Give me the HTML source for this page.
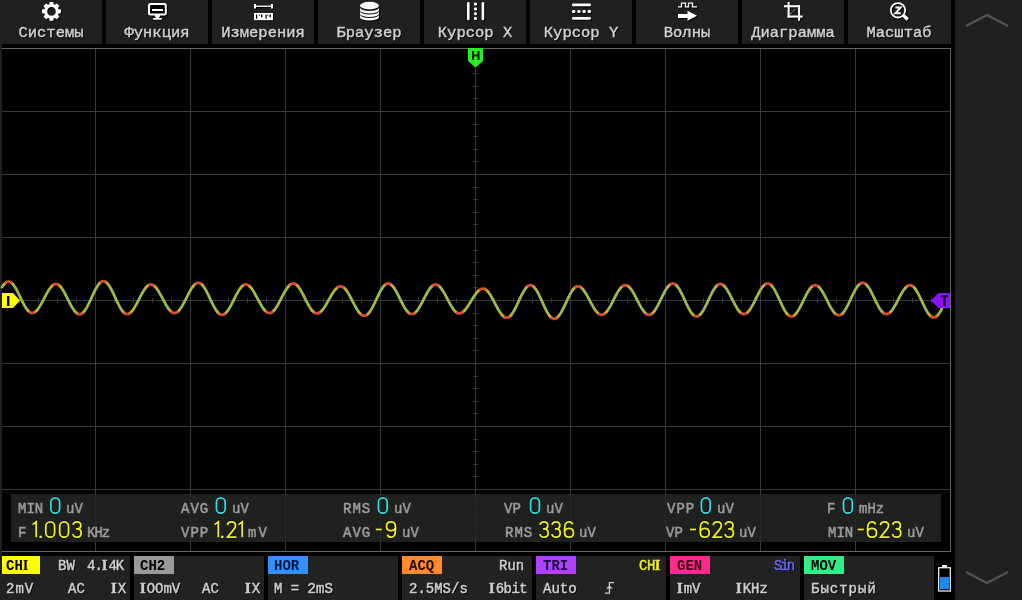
<!DOCTYPE html>
<html><head><meta charset="utf-8">
<style>
*{margin:0;padding:0;box-sizing:border-box}
html,body{width:1022px;height:600px;overflow:hidden;background:#000}
body{position:relative;font-family:"Liberation Mono",monospace;}
.btn,.pn,.pt,.ml,.lbt{will-change:transform}
.a{position:absolute}
.btn{position:absolute;top:0;width:102px;height:44px;background:#202020}
.btn .t{position:absolute;left:0;width:102px;top:25px;text-align:center;font-size:15.5px;line-height:16px;-webkit-text-stroke-width:0.4px;color:#d2d2d2;text-shadow:1px 1px 0 #000;white-space:nowrap}
.btn svg{position:absolute;left:41px;top:1px}
.pn{position:absolute;top:556px;height:44px;width:130px;background:#222}
.lb{position:absolute;left:0;top:0;width:40px;height:18px}
.pt{position:absolute;font-size:14px;line-height:14px;color:#cfcfcf;-webkit-text-stroke-width:0.45px;text-shadow:1px 1px 0 #000;white-space:nowrap}
.lbt{position:absolute;left:6px;top:2px;font-size:14px;line-height:14px;font-weight:bold;white-space:nowrap}
.ml{position:absolute;font-size:14px;line-height:14px;color:#9c9c9c;-webkit-text-stroke-width:0.5px;white-space:nowrap}
.mv{position:absolute;font-family:"Liberation Sans",sans-serif;font-size:24px;line-height:24px;white-space:nowrap;letter-spacing:1px;transform:scaleX(0.86);transform-origin:0 0}
.i{font-family:"Liberation Serif",serif;font-weight:bold;font-size:14.5px;letter-spacing:1px;line-height:0}
.cy{color:#22d2e6}.yl{color:#eeee22}
</style></head><body>
<!-- left strip -->
<div class="a" style="left:0;top:44px;width:2px;height:530px;background:#202020"></div>
<!-- right panel -->
<div class="a" style="left:955px;top:0;width:67px;height:600px;background:#202020"></div>
<svg class="a" style="left:955px;top:0" width="67" height="600">
<polyline points="11,26 32,15 53,26" fill="none" stroke="#555" stroke-width="2"/>
<polyline points="11,572 32,583 53,572" fill="none" stroke="#555" stroke-width="2"/>
</svg>

<!-- top buttons -->
<div class="btn" style="left:0"><div class="t">Системы</div></div>
<div class="btn" style="left:106px"><div class="t">Функция</div></div>
<div class="btn" style="left:212px"><div class="t">Измерения</div></div>
<div class="btn" style="left:318px"><div class="t">Браузер</div></div>
<div class="btn" style="left:424px"><div class="t">Курсор X</div></div>
<div class="btn" style="left:530px"><div class="t">Курсор Y</div></div>
<div class="btn" style="left:636px"><div class="t">Волны</div></div>
<div class="btn" style="left:742px"><div class="t">Диаграмма</div></div>
<div class="btn" style="left:848px;width:103px"><div class="t">Масштаб</div></div>


<!-- top icons -->
<svg class="a" style="left:0;top:0" width="955" height="44">
<g fill="#fff" stroke="#fff" style="filter:drop-shadow(1px 1px 0 #000)">
<path d="M49.31 4.33 L49.69 1.97 L53.31 1.97 L53.69 4.33 L54.95 4.85 L56.88 3.45 L59.45 6.02 L58.05 7.95 L58.57 9.21 L60.93 9.59 L60.93 13.21 L58.57 13.59 L58.05 14.85 L59.45 16.78 L56.88 19.35 L54.95 17.95 L53.69 18.47 L53.31 20.83 L49.69 20.83 L49.31 18.47 L48.05 17.95 L46.12 19.35 L43.55 16.78 L44.95 14.85 L44.43 13.59 L42.07 13.21 L42.07 9.59 L44.43 9.21 L44.95 7.95 L43.55 6.02 L46.12 3.45 L48.05 4.85Z M47.20 11.40 a4.3 4.3 0 1 0 8.6 0 a4.3 4.3 0 1 0 -8.6 0Z" fill-rule="evenodd" stroke="none"/>
<!-- monitor -->
<rect x="149" y="4" width="16.8" height="10.6" rx="1.5" fill="#000" stroke-width="2"/>
<rect x="152" y="9" width="11" height="2" stroke="none"/>
<path d="M155 15V16.5L156.3 18H153.2V19.8H161.8V18H158.7L160 16.5V15Z" stroke="none"/>
<!-- ruler -->
<rect x="254" y="4" width="2" height="4.5" stroke="none"/><rect x="271" y="4" width="2" height="4.5" stroke="none"/>
<rect x="256" y="5.6" width="15" height="1.3" stroke="none"/>
<rect x="254" y="13" width="19" height="7.2" stroke="none"/>
<!-- database -->
<ellipse cx="369.5" cy="5.6" rx="9.5" ry="3.8" stroke="none"/>
<path d="M360 7.5 v2.5 a9.5 3.6 0 0 0 19 0 v-2.5 a9.5 3.6 0 0 1 -19 0Z" stroke="none"/>
<path d="M360 11 v2.5 a9.5 3.6 0 0 0 19 0 v-2.5 a9.5 3.6 0 0 1 -19 0Z" stroke="none"/>
<path d="M360 14.5 v2.5 a9.5 3.6 0 0 0 19 0 v-2.5 a9.5 3.6 0 0 1 -19 0Z" stroke="none"/>
<!-- cursor x -->
<rect x="467" y="2" width="2.6" height="18.3" rx="1.2" stroke="none"/><rect x="481.6" y="2" width="2.6" height="18.3" rx="1.2" stroke="none"/>
<rect x="474" y="2.6" width="3" height="3" rx="1.2" stroke="none"/><rect x="474" y="7.4" width="3" height="3" rx="1.2" stroke="none"/><rect x="474" y="12.2" width="3" height="3" rx="1.2" stroke="none"/><rect x="474" y="17" width="3" height="3" rx="1.2" stroke="none"/>
<!-- cursor y -->
<rect x="572" y="3.6" width="19" height="2.6" rx="1.2" stroke="none"/><rect x="572" y="17.1" width="19" height="2.6" rx="1.2" stroke="none"/>
<rect x="572" y="10" width="3.4" height="3" rx="1.2" stroke="none"/><rect x="577.2" y="10" width="3.4" height="3" rx="1.2" stroke="none"/><rect x="582.4" y="10" width="3.4" height="3" rx="1.2" stroke="none"/><rect x="587.6" y="10" width="3.4" height="3" rx="1.2" stroke="none"/>
<!-- waves -->
<path d="M678 6.8 H681.5 V3.2 H685.5 V6.8 H688.5 V3.2 H692.5 V6.8 H697" fill="none" stroke-width="1.3"/>
<rect x="678" y="14" width="10" height="4" stroke="none"/>
<path d="M687.5 10.8 L697 15.8 L687.5 20.7Z" stroke="none"/>
<!-- crop -->
<rect x="787.6" y="2" width="2.1" height="15.6" stroke="none"/>
<rect x="784" y="5.2" width="16" height="2.1" stroke="none"/>
<rect x="798" y="5.2" width="2.1" height="15.5" stroke="none"/>
<rect x="787.6" y="15.5" width="15.1" height="2.1" stroke="none"/>
<path d="M790 14.2 L796 8.6" stroke-width="0.9" stroke-dasharray="1 1"/>
<!-- zoom -->
<circle cx="898" cy="10.3" r="7.2" fill="none" stroke-width="1.8"/>
<path d="M895.5 7.6 H900.6 L895.5 13.2 H900.8" fill="none" stroke-width="2"/>
<path d="M903.5 15.5 L907.8 19.5" stroke-width="3.2"/>
</g>
<g fill="#000">
<rect x="256" y="14.5" width="1.2" height="4.2"/><rect x="261" y="14.5" width="1.4" height="2.8"/><rect x="265.5" y="14.5" width="1.2" height="4.2"/><rect x="269.5" y="14.5" width="1.4" height="2.8"/>
<rect x="259" y="14.5" width="0.8" height="1.4"/><rect x="267.5" y="14.5" width="0.8" height="1.4"/>
</g>
</svg>

<!-- grid -->
<svg class="a" style="left:0;top:0" width="955" height="556">
<g stroke="#3a3a3a" stroke-width="1" shape-rendering="crispEdges">
<path d="M95.5 48V552M190.5 48V552M285.5 48V552M380.5 48V552M475.5 48V552M570.5 48V552M665.5 48V552M760.5 48V552M855.5 48V552"/>
<path d="M2 111.5H950M2 174.5H950M2 237.5H950M2 300.5H950M2 363.5H950M2 426.5H950M2 489.5H950"/>
</g>
<g stroke="#3a3a3a" stroke-width="1" shape-rendering="crispEdges"><path d="M19.5 298V303 M38.5 298V303 M57.5 298V303 M76.5 298V303 M114.5 298V303 M133.5 298V303 M152.5 298V303 M171.5 298V303 M209.5 298V303 M228.5 298V303 M247.5 298V303 M266.5 298V303 M304.5 298V303 M323.5 298V303 M342.5 298V303 M361.5 298V303 M399.5 298V303 M418.5 298V303 M437.5 298V303 M456.5 298V303 M494.5 298V303 M513.5 298V303 M532.5 298V303 M551.5 298V303 M589.5 298V303 M608.5 298V303 M627.5 298V303 M646.5 298V303 M684.5 298V303 M703.5 298V303 M722.5 298V303 M741.5 298V303 M779.5 298V303 M798.5 298V303 M817.5 298V303 M836.5 298V303 M874.5 298V303 M893.5 298V303 M912.5 298V303 M931.5 298V303 M473 61.1H478 M473 73.7H478 M473 86.3H478 M473 98.9H478 M473 124.1H478 M473 136.7H478 M473 149.3H478 M473 161.9H478 M473 187.1H478 M473 199.7H478 M473 212.3H478 M473 224.9H478 M473 250.1H478 M473 262.7H478 M473 275.3H478 M473 287.9H478 M473 313.1H478 M473 325.7H478 M473 338.3H478 M473 350.9H478 M473 376.1H478 M473 388.7H478 M473 401.3H478 M473 413.9H478 M473 439.1H478 M473 451.7H478 M473 464.3H478 M473 476.9H478 M473 502.1H478 M473 514.7H478 M473 527.3H478 M473 539.9H478" stroke="#3a3a3a"/></g>
<g stroke="#666" stroke-width="1" shape-rendering="crispEdges">
<path d="M2 48.5H951M2 551.5H951M950.5 48V552"/>
</g>
</svg>


<!-- waveform -->
<svg class="a" style="left:0;top:0" width="955" height="556">
<g fill="none" stroke-linejoin="round" stroke-linecap="round">
<path d="M2.0 287.1 L3.0 285.6 L4.0 284.3 L5.0 283.3 L6.0 282.5 L7.0 281.9 L8.0 281.6 L9.0 281.6 L10.0 281.9 L11.0 282.5 L12.0 283.3 L13.0 284.3 L14.0 285.6 L15.0 287.1 L16.0 288.7 L17.0 290.6 L18.0 292.5 L19.0 294.5 L20.0 296.6 L21.0 298.7 L22.0 300.7 L23.0 302.7 L24.0 304.6 L25.0 306.4 L26.0 308.0 L27.0 309.4 L28.0 310.6 L29.0 311.6 L30.0 312.3 L31.0 312.8 L32.0 313.0 L33.0 312.9 L34.0 312.6 L35.0 312.0 L36.0 311.2 L37.0 310.2 L38.0 308.9 L39.0 307.5 L40.0 305.9 L41.0 304.2 L42.0 302.4 L43.0 300.6 L44.0 298.6 L45.0 296.7 L46.0 294.8 L47.0 293.0 L48.0 291.3 L49.0 289.7 L50.0 288.3 L51.0 287.0 L52.0 285.9 L53.0 285.1 L54.0 284.5 L55.0 284.1 L56.0 284.0 L57.0 284.1 L58.0 284.6 L59.0 285.2 L60.0 286.1 L61.0 287.3 L62.0 288.6 L63.0 290.1 L64.0 291.8 L65.0 293.7 L66.0 295.6 L67.0 297.5 L68.0 299.6 L69.0 301.5 L70.0 303.5 L71.0 305.4 L72.0 307.2 L73.0 308.8 L74.0 310.2 L75.0 311.5 L76.0 312.6 L77.0 313.4 L78.0 313.9 L79.0 314.2 L80.0 314.3 L81.0 314.0 L82.0 313.5 L83.0 312.7 L84.0 311.6 L85.0 310.3 L86.0 308.8 L87.0 307.1 L88.0 305.2 L89.0 303.2 L90.0 301.1 L91.0 298.9 L92.0 296.7 L93.0 294.5 L94.0 292.4 L95.0 290.4 L96.0 288.5 L97.0 286.8 L98.0 285.2 L99.0 283.9 L100.0 282.8 L101.0 282.0 L102.0 281.5 L103.0 281.2 L104.0 281.3 L105.0 281.6 L106.0 282.2 L107.0 283.0 L108.0 284.2 L109.0 285.5 L110.0 287.1 L111.0 288.9 L112.0 290.8 L113.0 292.8 L114.0 294.9 L115.0 297.1 L116.0 299.3 L117.0 301.4 L118.0 303.5 L119.0 305.5 L120.0 307.3 L121.0 309.0 L122.0 310.5 L123.0 311.7 L124.0 312.7 L125.0 313.5 L126.0 313.9 L127.0 314.1 L128.0 314.0 L129.0 313.6 L130.0 313.0 L131.0 312.2 L132.0 311.1 L133.0 309.8 L134.0 308.4 L135.0 306.7 L136.0 305.0 L137.0 303.1 L138.0 301.2 L139.0 299.3 L140.0 297.3 L141.0 295.4 L142.0 293.5 L143.0 291.8 L144.0 290.2 L145.0 288.7 L146.0 287.4 L147.0 286.4 L148.0 285.5 L149.0 284.9 L150.0 284.6 L151.0 284.5 L152.0 284.7 L153.0 285.1 L154.0 285.7 L155.0 286.6 L156.0 287.7 L157.0 289.0 L158.0 290.4 L159.0 292.0 L160.0 293.8 L161.0 295.6 L162.0 297.4 L163.0 299.3 L164.0 301.2 L165.0 303.0 L166.0 304.8 L167.0 306.4 L168.0 308.0 L169.0 309.3 L170.0 310.5 L171.0 311.5 L172.0 312.2 L173.0 312.7 L174.0 313.0 L175.0 313.0 L176.0 312.7 L177.0 312.2 L178.0 311.5 L179.0 310.5 L180.0 309.2 L181.0 307.8 L182.0 306.2 L183.0 304.5 L184.0 302.7 L185.0 300.7 L186.0 298.7 L187.0 296.8 L188.0 294.8 L189.0 292.9 L190.0 291.0 L191.0 289.3 L192.0 287.7 L193.0 286.4 L194.0 285.2 L195.0 284.2 L196.0 283.5 L197.0 283.0 L198.0 282.8 L199.0 282.9 L200.0 283.2 L201.0 283.8 L202.0 284.7 L203.0 285.8 L204.0 287.2 L205.0 288.7 L206.0 290.4 L207.0 292.3 L208.0 294.3 L209.0 296.4 L210.0 298.5 L211.0 300.6 L212.0 302.7 L213.0 304.7 L214.0 306.6 L215.0 308.4 L216.0 310.0 L217.0 311.4 L218.0 312.6 L219.0 313.6 L220.0 314.2 L221.0 314.7 L222.0 314.8 L223.0 314.7 L224.0 314.3 L225.0 313.6 L226.0 312.7 L227.0 311.6 L228.0 310.3 L229.0 308.8 L230.0 307.1 L231.0 305.3 L232.0 303.4 L233.0 301.4 L234.0 299.4 L235.0 297.4 L236.0 295.4 L237.0 293.6 L238.0 291.8 L239.0 290.1 L240.0 288.7 L241.0 287.4 L242.0 286.3 L243.0 285.5 L244.0 284.9 L245.0 284.6 L246.0 284.5 L247.0 284.7 L248.0 285.1 L249.0 285.8 L250.0 286.7 L251.0 287.8 L252.0 289.1 L253.0 290.6 L254.0 292.2 L255.0 293.9 L256.0 295.8 L257.0 297.6 L258.0 299.5 L259.0 301.4 L260.0 303.2 L261.0 305.0 L262.0 306.6 L263.0 308.1 L264.0 309.4 L265.0 310.6 L266.0 311.5 L267.0 312.3 L268.0 312.7 L269.0 313.0 L270.0 313.0 L271.0 312.7 L272.0 312.2 L273.0 311.4 L274.0 310.4 L275.0 309.2 L276.0 307.8 L277.0 306.2 L278.0 304.5 L279.0 302.7 L280.0 300.8 L281.0 298.9 L282.0 296.9 L283.0 295.0 L284.0 293.1 L285.0 291.4 L286.0 289.7 L287.0 288.2 L288.0 286.9 L289.0 285.7 L290.0 284.8 L291.0 284.1 L292.0 283.7 L293.0 283.5 L294.0 283.6 L295.0 283.9 L296.0 284.5 L297.0 285.4 L298.0 286.4 L299.0 287.7 L300.0 289.2 L301.0 290.8 L302.0 292.6 L303.0 294.4 L304.0 296.4 L305.0 298.4 L306.0 300.3 L307.0 302.3 L308.0 304.1 L309.0 305.9 L310.0 307.6 L311.0 309.1 L312.0 310.4 L313.0 311.4 L314.0 312.3 L315.0 312.9 L316.0 313.3 L317.0 313.4 L318.0 313.3 L319.0 312.9 L320.0 312.3 L321.0 311.5 L322.0 310.4 L323.0 309.2 L324.0 307.9 L325.0 306.3 L326.0 304.7 L327.0 303.0 L328.0 301.2 L329.0 299.4 L330.0 297.7 L331.0 295.9 L332.0 294.2 L333.0 292.7 L334.0 291.2 L335.0 289.9 L336.0 288.8 L337.0 287.8 L338.0 287.1 L339.0 286.6 L340.0 286.4 L341.0 286.3 L342.0 286.5 L343.0 287.0 L344.0 287.7 L345.0 288.7 L346.0 289.9 L347.0 291.2 L348.0 292.8 L349.0 294.4 L350.0 296.3 L351.0 298.1 L352.0 300.1 L353.0 302.0 L354.0 304.0 L355.0 305.8 L356.0 307.7 L357.0 309.3 L358.0 310.9 L359.0 312.2 L360.0 313.4 L361.0 314.4 L362.0 315.1 L363.0 315.6 L364.0 315.8 L365.0 315.7 L366.0 315.4 L367.0 314.8 L368.0 314.0 L369.0 312.8 L370.0 311.5 L371.0 309.9 L372.0 308.2 L373.0 306.3 L374.0 304.3 L375.0 302.3 L376.0 300.1 L377.0 298.0 L378.0 295.9 L379.0 293.9 L380.0 291.9 L381.0 290.1 L382.0 288.5 L383.0 287.0 L384.0 285.8 L385.0 284.8 L386.0 284.1 L387.0 283.7 L388.0 283.5 L389.0 283.6 L390.0 284.0 L391.0 284.6 L392.0 285.5 L393.0 286.6 L394.0 287.9 L395.0 289.5 L396.0 291.1 L397.0 293.0 L398.0 294.9 L399.0 296.9 L400.0 298.9 L401.0 300.9 L402.0 302.9 L403.0 304.8 L404.0 306.6 L405.0 308.3 L406.0 309.8 L407.0 311.1 L408.0 312.2 L409.0 313.1 L410.0 313.7 L411.0 314.0 L412.0 314.1 L413.0 313.9 L414.0 313.5 L415.0 312.8 L416.0 311.9 L417.0 310.7 L418.0 309.4 L419.0 307.9 L420.0 306.2 L421.0 304.4 L422.0 302.6 L423.0 300.6 L424.0 298.7 L425.0 296.7 L426.0 294.8 L427.0 293.0 L428.0 291.3 L429.0 289.7 L430.0 288.3 L431.0 287.1 L432.0 286.1 L433.0 285.3 L434.0 284.8 L435.0 284.5 L436.0 284.5 L437.0 284.8 L438.0 285.3 L439.0 286.0 L440.0 286.9 L441.0 288.1 L442.0 289.5 L443.0 291.0 L444.0 292.7 L445.0 294.4 L446.0 296.3 L447.0 298.2 L448.0 300.1 L449.0 302.0 L450.0 303.8 L451.0 305.6 L452.0 307.2 L453.0 308.7 L454.0 310.0 L455.0 311.2 L456.0 312.1 L457.0 312.8 L458.0 313.2 L459.0 313.4 L460.0 313.3 L461.0 313.1 L462.0 312.6 L463.0 311.9 L464.0 311.0 L465.0 310.0 L466.0 308.8 L467.0 307.4 L468.0 306.0 L469.0 304.4 L470.0 302.8 L471.0 301.2 L472.0 299.6 L473.0 298.0 L474.0 296.4 L475.0 294.9 L476.0 293.5 L477.0 292.3 L478.0 291.2 L479.0 290.3 L480.0 289.6 L481.0 289.0 L482.0 288.7 L483.0 288.6 L484.0 288.7 L485.0 289.1 L486.0 289.7 L487.0 290.6 L488.0 291.7 L489.0 293.0 L490.0 294.4 L491.0 296.0 L492.0 297.8 L493.0 299.6 L494.0 301.5 L495.0 303.4 L496.0 305.4 L497.0 307.2 L498.0 309.1 L499.0 310.8 L500.0 312.3 L501.0 313.7 L502.0 315.0 L503.0 316.0 L504.0 316.8 L505.0 317.3 L506.0 317.6 L507.0 317.7 L508.0 317.5 L509.0 317.0 L510.0 316.2 L511.0 315.1 L512.0 313.9 L513.0 312.4 L514.0 310.7 L515.0 308.9 L516.0 306.9 L517.0 304.8 L518.0 302.7 L519.0 300.5 L520.0 298.4 L521.0 296.3 L522.0 294.3 L523.0 292.5 L524.0 290.8 L525.0 289.2 L526.0 287.9 L527.0 286.9 L528.0 286.0 L529.0 285.5 L530.0 285.2 L531.0 285.2 L532.0 285.6 L533.0 286.2 L534.0 287.0 L535.0 288.2 L536.0 289.5 L537.0 291.1 L538.0 292.9 L539.0 294.9 L540.0 297.0 L541.0 299.1 L542.0 301.3 L543.0 303.6 L544.0 305.8 L545.0 307.9 L546.0 309.9 L547.0 311.8 L548.0 313.5 L549.0 315.0 L550.0 316.3 L551.0 317.4 L552.0 318.1 L553.0 318.6 L554.0 318.8 L555.0 318.7 L556.0 318.3 L557.0 317.7 L558.0 316.7 L559.0 315.6 L560.0 314.2 L561.0 312.6 L562.0 310.8 L563.0 308.9 L564.0 306.9 L565.0 304.7 L566.0 302.6 L567.0 300.5 L568.0 298.4 L569.0 296.3 L570.0 294.4 L571.0 292.6 L572.0 291.0 L573.0 289.6 L574.0 288.4 L575.0 287.5 L576.0 286.8 L577.0 286.4 L578.0 286.3 L579.0 286.5 L580.0 286.8 L581.0 287.5 L582.0 288.4 L583.0 289.4 L584.0 290.7 L585.0 292.2 L586.0 293.8 L587.0 295.5 L588.0 297.3 L589.0 299.1 L590.0 301.0 L591.0 302.9 L592.0 304.7 L593.0 306.5 L594.0 308.2 L595.0 309.7 L596.0 311.1 L597.0 312.2 L598.0 313.2 L599.0 314.0 L600.0 314.5 L601.0 314.8 L602.0 314.8 L603.0 314.5 L604.0 314.1 L605.0 313.3 L606.0 312.4 L607.0 311.2 L608.0 309.8 L609.0 308.3 L610.0 306.6 L611.0 304.8 L612.0 302.9 L613.0 300.9 L614.0 299.0 L615.0 297.0 L616.0 295.1 L617.0 293.3 L618.0 291.7 L619.0 290.1 L620.0 288.8 L621.0 287.6 L622.0 286.6 L623.0 285.9 L624.0 285.4 L625.0 285.2 L626.0 285.3 L627.0 285.6 L628.0 286.1 L629.0 286.9 L630.0 287.9 L631.0 289.2 L632.0 290.6 L633.0 292.2 L634.0 293.9 L635.0 295.7 L636.0 297.7 L637.0 299.6 L638.0 301.6 L639.0 303.5 L640.0 305.4 L641.0 307.1 L642.0 308.8 L643.0 310.3 L644.0 311.6 L645.0 312.7 L646.0 313.6 L647.0 314.3 L648.0 314.7 L649.0 314.8 L650.0 314.7 L651.0 314.3 L652.0 313.6 L653.0 312.7 L654.0 311.6 L655.0 310.2 L656.0 308.6 L657.0 306.9 L658.0 305.1 L659.0 303.1 L660.0 301.1 L661.0 299.0 L662.0 296.9 L663.0 294.9 L664.0 293.0 L665.0 291.1 L666.0 289.4 L667.0 287.9 L668.0 286.6 L669.0 285.4 L670.0 284.6 L671.0 283.9 L672.0 283.6 L673.0 283.5 L674.0 283.7 L675.0 284.2 L676.0 285.0 L677.0 286.0 L678.0 287.3 L679.0 288.7 L680.0 290.4 L681.0 292.3 L682.0 294.3 L683.0 296.4 L684.0 298.5 L685.0 300.7 L686.0 302.9 L687.0 305.0 L688.0 307.0 L689.0 308.9 L690.0 310.7 L691.0 312.2 L692.0 313.6 L693.0 314.7 L694.0 315.5 L695.0 316.1 L696.0 316.4 L697.0 316.4 L698.0 316.1 L699.0 315.5 L700.0 314.7 L701.0 313.6 L702.0 312.3 L703.0 310.8 L704.0 309.1 L705.0 307.2 L706.0 305.2 L707.0 303.1 L708.0 301.0 L709.0 298.9 L710.0 296.7 L711.0 294.7 L712.0 292.7 L713.0 290.9 L714.0 289.2 L715.0 287.8 L716.0 286.5 L717.0 285.5 L718.0 284.7 L719.0 284.2 L720.0 284.0 L721.0 284.1 L722.0 284.4 L723.0 285.0 L724.0 285.8 L725.0 286.9 L726.0 288.2 L727.0 289.6 L728.0 291.3 L729.0 293.0 L730.0 294.9 L731.0 296.9 L732.0 298.9 L733.0 300.8 L734.0 302.8 L735.0 304.7 L736.0 306.5 L737.0 308.2 L738.0 309.7 L739.0 311.0 L740.0 312.1 L741.0 313.0 L742.0 313.6 L743.0 314.0 L744.0 314.1 L745.0 314.0 L746.0 313.5 L747.0 312.9 L748.0 312.0 L749.0 310.8 L750.0 309.5 L751.0 307.9 L752.0 306.2 L753.0 304.4 L754.0 302.5 L755.0 300.5 L756.0 298.4 L757.0 296.4 L758.0 294.5 L759.0 292.6 L760.0 290.8 L761.0 289.1 L762.0 287.6 L763.0 286.4 L764.0 285.3 L765.0 284.5 L766.0 283.9 L767.0 283.6 L768.0 283.5 L769.0 283.7 L770.0 284.3 L771.0 285.0 L772.0 286.1 L773.0 287.4 L774.0 288.9 L775.0 290.6 L776.0 292.5 L777.0 294.5 L778.0 296.6 L779.0 298.8 L780.0 300.9 L781.0 303.1 L782.0 305.2 L783.0 307.2 L784.0 309.1 L785.0 310.8 L786.0 312.4 L787.0 313.7 L788.0 314.8 L789.0 315.6 L790.0 316.1 L791.0 316.4 L792.0 316.4 L793.0 316.1 L794.0 315.5 L795.0 314.7 L796.0 313.6 L797.0 312.3 L798.0 310.8 L799.0 309.2 L800.0 307.3 L801.0 305.4 L802.0 303.4 L803.0 301.4 L804.0 299.3 L805.0 297.3 L806.0 295.3 L807.0 293.4 L808.0 291.7 L809.0 290.1 L810.0 288.7 L811.0 287.5 L812.0 286.5 L813.0 285.8 L814.0 285.4 L815.0 285.2 L816.0 285.3 L817.0 285.7 L818.0 286.3 L819.0 287.1 L820.0 288.2 L821.0 289.5 L822.0 291.0 L823.0 292.6 L824.0 294.4 L825.0 296.3 L826.0 298.3 L827.0 300.2 L828.0 302.2 L829.0 304.2 L830.0 306.1 L831.0 307.9 L832.0 309.5 L833.0 311.0 L834.0 312.3 L835.0 313.4 L836.0 314.2 L837.0 314.8 L838.0 315.2 L839.0 315.3 L840.0 315.1 L841.0 314.6 L842.0 313.9 L843.0 312.9 L844.0 311.7 L845.0 310.2 L846.0 308.6 L847.0 306.7 L848.0 304.8 L849.0 302.7 L850.0 300.6 L851.0 298.5 L852.0 296.3 L853.0 294.2 L854.0 292.2 L855.0 290.3 L856.0 288.6 L857.0 287.1 L858.0 285.7 L859.0 284.6 L860.0 283.8 L861.0 283.2 L862.0 282.9 L863.0 282.8 L864.0 283.1 L865.0 283.6 L866.0 284.4 L867.0 285.4 L868.0 286.6 L869.0 288.1 L870.0 289.7 L871.0 291.5 L872.0 293.5 L873.0 295.5 L874.0 297.5 L875.0 299.6 L876.0 301.6 L877.0 303.6 L878.0 305.5 L879.0 307.3 L880.0 309.0 L881.0 310.4 L882.0 311.6 L883.0 312.6 L884.0 313.4 L885.0 313.9 L886.0 314.1 L887.0 314.0 L888.0 313.7 L889.0 313.2 L890.0 312.4 L891.0 311.4 L892.0 310.2 L893.0 308.8 L894.0 307.2 L895.0 305.5 L896.0 303.8 L897.0 301.9 L898.0 300.0 L899.0 298.1 L900.0 296.2 L901.0 294.4 L902.0 292.6 L903.0 291.0 L904.0 289.6 L905.0 288.3 L906.0 287.2 L907.0 286.4 L908.0 285.7 L909.0 285.3 L910.0 285.2 L911.0 285.3 L912.0 285.7 L913.0 286.4 L914.0 287.4 L915.0 288.5 L916.0 290.0 L917.0 291.6 L918.0 293.3 L919.0 295.3 L920.0 297.3 L921.0 299.4 L922.0 301.5 L923.0 303.6 L924.0 305.7 L925.0 307.7 L926.0 309.6 L927.0 311.4 L928.0 312.9 L929.0 314.3 L930.0 315.5 L931.0 316.3 L932.0 317.0 L933.0 317.3 L934.0 317.4 L935.0 317.2 L936.0 316.7 L937.0 315.9 L938.0 314.8 L939.0 313.5 L940.0 312.0 L941.0 310.3 L942.0 308.4" stroke="#3848b0" stroke-width="3.4" stroke-opacity="0.45"/>
<path d="M2.0 287.1 L3.0 285.6 L4.0 284.3 M13.0 284.3 L14.0 285.6 L15.0 287.1 L16.0 288.7 L17.0 290.6 L18.0 292.5 L19.0 294.5 L20.0 296.6 L21.0 298.7 L22.0 300.7 L23.0 302.7 L24.0 304.6 L25.0 306.4 L26.0 308.0 L27.0 309.4 L28.0 310.6 M37.0 310.2 L38.0 308.9 L39.0 307.5 L40.0 305.9 L41.0 304.2 L42.0 302.4 L43.0 300.6 L44.0 298.6 L45.0 296.7 L46.0 294.8 L47.0 293.0 L48.0 291.3 L49.0 289.7 L50.0 288.3 L51.0 287.0 M61.0 287.3 L62.0 288.6 L63.0 290.1 L64.0 291.8 L65.0 293.7 L66.0 295.6 L67.0 297.5 L68.0 299.6 L69.0 301.5 L70.0 303.5 L71.0 305.4 L72.0 307.2 L73.0 308.8 L74.0 310.2 L75.0 311.5 M84.0 311.6 L85.0 310.3 L86.0 308.8 L87.0 307.1 L88.0 305.2 L89.0 303.2 L90.0 301.1 L91.0 298.9 L92.0 296.7 L93.0 294.5 L94.0 292.4 L95.0 290.4 L96.0 288.5 L97.0 286.8 L98.0 285.2 L99.0 283.9 M108.0 284.2 L109.0 285.5 L110.0 287.1 L111.0 288.9 L112.0 290.8 L113.0 292.8 L114.0 294.9 L115.0 297.1 L116.0 299.3 L117.0 301.4 L118.0 303.5 L119.0 305.5 L120.0 307.3 L121.0 309.0 L122.0 310.5 L123.0 311.7 M132.0 311.1 L133.0 309.8 L134.0 308.4 L135.0 306.7 L136.0 305.0 L137.0 303.1 L138.0 301.2 L139.0 299.3 L140.0 297.3 L141.0 295.4 L142.0 293.5 L143.0 291.8 L144.0 290.2 L145.0 288.7 L146.0 287.4 M156.0 287.7 L157.0 289.0 L158.0 290.4 L159.0 292.0 L160.0 293.8 L161.0 295.6 L162.0 297.4 L163.0 299.3 L164.0 301.2 L165.0 303.0 L166.0 304.8 L167.0 306.4 L168.0 308.0 L169.0 309.3 M179.0 310.5 L180.0 309.2 L181.0 307.8 L182.0 306.2 L183.0 304.5 L184.0 302.7 L185.0 300.7 L186.0 298.7 L187.0 296.8 L188.0 294.8 L189.0 292.9 L190.0 291.0 L191.0 289.3 L192.0 287.7 L193.0 286.4 M203.0 285.8 L204.0 287.2 L205.0 288.7 L206.0 290.4 L207.0 292.3 L208.0 294.3 L209.0 296.4 L210.0 298.5 L211.0 300.6 L212.0 302.7 L213.0 304.7 L214.0 306.6 L215.0 308.4 L216.0 310.0 L217.0 311.4 M227.0 311.6 L228.0 310.3 L229.0 308.8 L230.0 307.1 L231.0 305.3 L232.0 303.4 L233.0 301.4 L234.0 299.4 L235.0 297.4 L236.0 295.4 L237.0 293.6 L238.0 291.8 L239.0 290.1 L240.0 288.7 L241.0 287.4 M251.0 287.8 L252.0 289.1 L253.0 290.6 L254.0 292.2 L255.0 293.9 L256.0 295.8 L257.0 297.6 L258.0 299.5 L259.0 301.4 L260.0 303.2 L261.0 305.0 L262.0 306.6 L263.0 308.1 L264.0 309.4 M274.0 310.4 L275.0 309.2 L276.0 307.8 L277.0 306.2 L278.0 304.5 L279.0 302.7 L280.0 300.8 L281.0 298.9 L282.0 296.9 L283.0 295.0 L284.0 293.1 L285.0 291.4 L286.0 289.7 L287.0 288.2 L288.0 286.9 M298.0 286.4 L299.0 287.7 L300.0 289.2 L301.0 290.8 L302.0 292.6 L303.0 294.4 L304.0 296.4 L305.0 298.4 L306.0 300.3 L307.0 302.3 L308.0 304.1 L309.0 305.9 L310.0 307.6 L311.0 309.1 L312.0 310.4 M322.0 310.4 L323.0 309.2 L324.0 307.9 L325.0 306.3 L326.0 304.7 L327.0 303.0 L328.0 301.2 L329.0 299.4 L330.0 297.7 L331.0 295.9 L332.0 294.2 L333.0 292.7 L334.0 291.2 L335.0 289.9 M346.0 289.9 L347.0 291.2 L348.0 292.8 L349.0 294.4 L350.0 296.3 L351.0 298.1 L352.0 300.1 L353.0 302.0 L354.0 304.0 L355.0 305.8 L356.0 307.7 L357.0 309.3 L358.0 310.9 L359.0 312.2 M369.0 312.8 L370.0 311.5 L371.0 309.9 L372.0 308.2 L373.0 306.3 L374.0 304.3 L375.0 302.3 L376.0 300.1 L377.0 298.0 L378.0 295.9 L379.0 293.9 L380.0 291.9 L381.0 290.1 L382.0 288.5 L383.0 287.0 L384.0 285.8 M393.0 286.6 L394.0 287.9 L395.0 289.5 L396.0 291.1 L397.0 293.0 L398.0 294.9 L399.0 296.9 L400.0 298.9 L401.0 300.9 L402.0 302.9 L403.0 304.8 L404.0 306.6 L405.0 308.3 L406.0 309.8 L407.0 311.1 M417.0 310.7 L418.0 309.4 L419.0 307.9 L420.0 306.2 L421.0 304.4 L422.0 302.6 L423.0 300.6 L424.0 298.7 L425.0 296.7 L426.0 294.8 L427.0 293.0 L428.0 291.3 L429.0 289.7 L430.0 288.3 L431.0 287.1 M441.0 288.1 L442.0 289.5 L443.0 291.0 L444.0 292.7 L445.0 294.4 L446.0 296.3 L447.0 298.2 L448.0 300.1 L449.0 302.0 L450.0 303.8 L451.0 305.6 L452.0 307.2 L453.0 308.7 L454.0 310.0 M465.0 310.0 L466.0 308.8 L467.0 307.4 L468.0 306.0 L469.0 304.4 L470.0 302.8 L471.0 301.2 L472.0 299.6 L473.0 298.0 L474.0 296.4 L475.0 294.9 L476.0 293.5 L477.0 292.3 M488.0 291.7 L489.0 293.0 L490.0 294.4 L491.0 296.0 L492.0 297.8 L493.0 299.6 L494.0 301.5 L495.0 303.4 L496.0 305.4 L497.0 307.2 L498.0 309.1 L499.0 310.8 L500.0 312.3 L501.0 313.7 L502.0 315.0 M511.0 315.1 L512.0 313.9 L513.0 312.4 L514.0 310.7 L515.0 308.9 L516.0 306.9 L517.0 304.8 L518.0 302.7 L519.0 300.5 L520.0 298.4 L521.0 296.3 L522.0 294.3 L523.0 292.5 L524.0 290.8 L525.0 289.2 L526.0 287.9 M535.0 288.2 L536.0 289.5 L537.0 291.1 L538.0 292.9 L539.0 294.9 L540.0 297.0 L541.0 299.1 L542.0 301.3 L543.0 303.6 L544.0 305.8 L545.0 307.9 L546.0 309.9 L547.0 311.8 L548.0 313.5 L549.0 315.0 L550.0 316.3 M559.0 315.6 L560.0 314.2 L561.0 312.6 L562.0 310.8 L563.0 308.9 L564.0 306.9 L565.0 304.7 L566.0 302.6 L567.0 300.5 L568.0 298.4 L569.0 296.3 L570.0 294.4 L571.0 292.6 L572.0 291.0 L573.0 289.6 M583.0 289.4 L584.0 290.7 L585.0 292.2 L586.0 293.8 L587.0 295.5 L588.0 297.3 L589.0 299.1 L590.0 301.0 L591.0 302.9 L592.0 304.7 L593.0 306.5 L594.0 308.2 L595.0 309.7 L596.0 311.1 M607.0 311.2 L608.0 309.8 L609.0 308.3 L610.0 306.6 L611.0 304.8 L612.0 302.9 L613.0 300.9 L614.0 299.0 L615.0 297.0 L616.0 295.1 L617.0 293.3 L618.0 291.7 L619.0 290.1 L620.0 288.8 M630.0 287.9 L631.0 289.2 L632.0 290.6 L633.0 292.2 L634.0 293.9 L635.0 295.7 L636.0 297.7 L637.0 299.6 L638.0 301.6 L639.0 303.5 L640.0 305.4 L641.0 307.1 L642.0 308.8 L643.0 310.3 L644.0 311.6 M654.0 311.6 L655.0 310.2 L656.0 308.6 L657.0 306.9 L658.0 305.1 L659.0 303.1 L660.0 301.1 L661.0 299.0 L662.0 296.9 L663.0 294.9 L664.0 293.0 L665.0 291.1 L666.0 289.4 L667.0 287.9 L668.0 286.6 M677.0 286.0 L678.0 287.3 L679.0 288.7 L680.0 290.4 L681.0 292.3 L682.0 294.3 L683.0 296.4 L684.0 298.5 L685.0 300.7 L686.0 302.9 L687.0 305.0 L688.0 307.0 L689.0 308.9 L690.0 310.7 L691.0 312.2 L692.0 313.6 M701.0 313.6 L702.0 312.3 L703.0 310.8 L704.0 309.1 L705.0 307.2 L706.0 305.2 L707.0 303.1 L708.0 301.0 L709.0 298.9 L710.0 296.7 L711.0 294.7 L712.0 292.7 L713.0 290.9 L714.0 289.2 L715.0 287.8 L716.0 286.5 M725.0 286.9 L726.0 288.2 L727.0 289.6 L728.0 291.3 L729.0 293.0 L730.0 294.9 L731.0 296.9 L732.0 298.9 L733.0 300.8 L734.0 302.8 L735.0 304.7 L736.0 306.5 L737.0 308.2 L738.0 309.7 L739.0 311.0 M749.0 310.8 L750.0 309.5 L751.0 307.9 L752.0 306.2 L753.0 304.4 L754.0 302.5 L755.0 300.5 L756.0 298.4 L757.0 296.4 L758.0 294.5 L759.0 292.6 L760.0 290.8 L761.0 289.1 L762.0 287.6 L763.0 286.4 M772.0 286.1 L773.0 287.4 L774.0 288.9 L775.0 290.6 L776.0 292.5 L777.0 294.5 L778.0 296.6 L779.0 298.8 L780.0 300.9 L781.0 303.1 L782.0 305.2 L783.0 307.2 L784.0 309.1 L785.0 310.8 L786.0 312.4 L787.0 313.7 M796.0 313.6 L797.0 312.3 L798.0 310.8 L799.0 309.2 L800.0 307.3 L801.0 305.4 L802.0 303.4 L803.0 301.4 L804.0 299.3 L805.0 297.3 L806.0 295.3 L807.0 293.4 L808.0 291.7 L809.0 290.1 L810.0 288.7 M820.0 288.2 L821.0 289.5 L822.0 291.0 L823.0 292.6 L824.0 294.4 L825.0 296.3 L826.0 298.3 L827.0 300.2 L828.0 302.2 L829.0 304.2 L830.0 306.1 L831.0 307.9 L832.0 309.5 L833.0 311.0 L834.0 312.3 M843.0 312.9 L844.0 311.7 L845.0 310.2 L846.0 308.6 L847.0 306.7 L848.0 304.8 L849.0 302.7 L850.0 300.6 L851.0 298.5 L852.0 296.3 L853.0 294.2 L854.0 292.2 L855.0 290.3 L856.0 288.6 L857.0 287.1 L858.0 285.7 M867.0 285.4 L868.0 286.6 L869.0 288.1 L870.0 289.7 L871.0 291.5 L872.0 293.5 L873.0 295.5 L874.0 297.5 L875.0 299.6 L876.0 301.6 L877.0 303.6 L878.0 305.5 L879.0 307.3 L880.0 309.0 L881.0 310.4 L882.0 311.6 M891.0 311.4 L892.0 310.2 L893.0 308.8 L894.0 307.2 L895.0 305.5 L896.0 303.8 L897.0 301.9 L898.0 300.0 L899.0 298.1 L900.0 296.2 L901.0 294.4 L902.0 292.6 L903.0 291.0 L904.0 289.6 L905.0 288.3 M915.0 288.5 L916.0 290.0 L917.0 291.6 L918.0 293.3 L919.0 295.3 L920.0 297.3 L921.0 299.4 L922.0 301.5 L923.0 303.6 L924.0 305.7 L925.0 307.7 L926.0 309.6 L927.0 311.4 L928.0 312.9 L929.0 314.3 M938.0 314.8 L939.0 313.5 L940.0 312.0 L941.0 310.3 L942.0 308.4" stroke="#90d848" stroke-width="2.5"/>
<path d="M4.0 284.3 L5.0 283.3 L6.0 282.5 M11.0 282.5 L12.0 283.3 L13.0 284.3 M28.0 310.6 L29.0 311.6 L30.0 312.3 M34.0 312.6 L35.0 312.0 L36.0 311.2 L37.0 310.2 M51.0 287.0 L52.0 285.9 L53.0 285.1 L54.0 284.5 M58.0 284.6 L59.0 285.2 L60.0 286.1 L61.0 287.3 M75.0 311.5 L76.0 312.6 L77.0 313.4 L78.0 313.9 M82.0 313.5 L83.0 312.7 L84.0 311.6 M99.0 283.9 L100.0 282.8 L101.0 282.0 M105.0 281.6 L106.0 282.2 L107.0 283.0 L108.0 284.2 M123.0 311.7 L124.0 312.7 L125.0 313.5 M129.0 313.6 L130.0 313.0 L131.0 312.2 L132.0 311.1 M146.0 287.4 L147.0 286.4 L148.0 285.5 L149.0 284.9 M153.0 285.1 L154.0 285.7 L155.0 286.6 L156.0 287.7 M169.0 309.3 L170.0 310.5 L171.0 311.5 L172.0 312.2 M177.0 312.2 L178.0 311.5 L179.0 310.5 M193.0 286.4 L194.0 285.2 L195.0 284.2 L196.0 283.5 M200.0 283.2 L201.0 283.8 L202.0 284.7 L203.0 285.8 M217.0 311.4 L218.0 312.6 L219.0 313.6 L220.0 314.2 M224.0 314.3 L225.0 313.6 L226.0 312.7 L227.0 311.6 M241.0 287.4 L242.0 286.3 L243.0 285.5 L244.0 284.9 M248.0 285.1 L249.0 285.8 L250.0 286.7 L251.0 287.8 M264.0 309.4 L265.0 310.6 L266.0 311.5 L267.0 312.3 M272.0 312.2 L273.0 311.4 L274.0 310.4 M288.0 286.9 L289.0 285.7 L290.0 284.8 L291.0 284.1 M295.0 283.9 L296.0 284.5 L297.0 285.4 L298.0 286.4 M312.0 310.4 L313.0 311.4 L314.0 312.3 L315.0 312.9 M319.0 312.9 L320.0 312.3 L321.0 311.5 L322.0 310.4 M335.0 289.9 L336.0 288.8 L337.0 287.8 L338.0 287.1 M343.0 287.0 L344.0 287.7 L345.0 288.7 L346.0 289.9 M359.0 312.2 L360.0 313.4 L361.0 314.4 L362.0 315.1 M366.0 315.4 L367.0 314.8 L368.0 314.0 L369.0 312.8 M384.0 285.8 L385.0 284.8 L386.0 284.1 M390.0 284.0 L391.0 284.6 L392.0 285.5 L393.0 286.6 M407.0 311.1 L408.0 312.2 L409.0 313.1 L410.0 313.7 M414.0 313.5 L415.0 312.8 L416.0 311.9 L417.0 310.7 M431.0 287.1 L432.0 286.1 L433.0 285.3 M438.0 285.3 L439.0 286.0 L440.0 286.9 L441.0 288.1 M454.0 310.0 L455.0 311.2 L456.0 312.1 L457.0 312.8 M462.0 312.6 L463.0 311.9 L464.0 311.0 L465.0 310.0 M477.0 292.3 L478.0 291.2 L479.0 290.3 L480.0 289.6 M485.0 289.1 L486.0 289.7 L487.0 290.6 L488.0 291.7 M502.0 315.0 L503.0 316.0 L504.0 316.8 L505.0 317.3 M509.0 317.0 L510.0 316.2 L511.0 315.1 M526.0 287.9 L527.0 286.9 L528.0 286.0 M532.0 285.6 L533.0 286.2 L534.0 287.0 L535.0 288.2 M550.0 316.3 L551.0 317.4 L552.0 318.1 M556.0 318.3 L557.0 317.7 L558.0 316.7 L559.0 315.6 M573.0 289.6 L574.0 288.4 L575.0 287.5 L576.0 286.8 M580.0 286.8 L581.0 287.5 L582.0 288.4 L583.0 289.4 M596.0 311.1 L597.0 312.2 L598.0 313.2 L599.0 314.0 M604.0 314.1 L605.0 313.3 L606.0 312.4 L607.0 311.2 M620.0 288.8 L621.0 287.6 L622.0 286.6 L623.0 285.9 M627.0 285.6 L628.0 286.1 L629.0 286.9 L630.0 287.9 M644.0 311.6 L645.0 312.7 L646.0 313.6 L647.0 314.3 M651.0 314.3 L652.0 313.6 L653.0 312.7 L654.0 311.6 M668.0 286.6 L669.0 285.4 L670.0 284.6 L671.0 283.9 M675.0 284.2 L676.0 285.0 L677.0 286.0 M692.0 313.6 L693.0 314.7 L694.0 315.5 L695.0 316.1 M698.0 316.1 L699.0 315.5 L700.0 314.7 L701.0 313.6 M716.0 286.5 L717.0 285.5 L718.0 284.7 M722.0 284.4 L723.0 285.0 L724.0 285.8 L725.0 286.9 M739.0 311.0 L740.0 312.1 L741.0 313.0 L742.0 313.6 M746.0 313.5 L747.0 312.9 L748.0 312.0 L749.0 310.8 M763.0 286.4 L764.0 285.3 L765.0 284.5 L766.0 283.9 M770.0 284.3 L771.0 285.0 L772.0 286.1 M787.0 313.7 L788.0 314.8 L789.0 315.6 M793.0 316.1 L794.0 315.5 L795.0 314.7 L796.0 313.6 M810.0 288.7 L811.0 287.5 L812.0 286.5 L813.0 285.8 M817.0 285.7 L818.0 286.3 L819.0 287.1 L820.0 288.2 M834.0 312.3 L835.0 313.4 L836.0 314.2 L837.0 314.8 M841.0 314.6 L842.0 313.9 L843.0 312.9 M858.0 285.7 L859.0 284.6 L860.0 283.8 L861.0 283.2 M865.0 283.6 L866.0 284.4 L867.0 285.4 M882.0 311.6 L883.0 312.6 L884.0 313.4 M889.0 313.2 L890.0 312.4 L891.0 311.4 M905.0 288.3 L906.0 287.2 L907.0 286.4 L908.0 285.7 M912.0 285.7 L913.0 286.4 L914.0 287.4 L915.0 288.5 M929.0 314.3 L930.0 315.5 L931.0 316.3 L932.0 317.0 M936.0 316.7 L937.0 315.9 L938.0 314.8" stroke="#d0b838" stroke-width="2.5"/>
<path d="M6.0 282.5 L7.0 281.9 L8.0 281.6 L9.0 281.6 L10.0 281.9 L11.0 282.5 M30.0 312.3 L31.0 312.8 L32.0 313.0 L33.0 312.9 L34.0 312.6 M54.0 284.5 L55.0 284.1 L56.0 284.0 L57.0 284.1 L58.0 284.6 M78.0 313.9 L79.0 314.2 L80.0 314.3 L81.0 314.0 L82.0 313.5 M101.0 282.0 L102.0 281.5 L103.0 281.2 L104.0 281.3 L105.0 281.6 M125.0 313.5 L126.0 313.9 L127.0 314.1 L128.0 314.0 L129.0 313.6 M149.0 284.9 L150.0 284.6 L151.0 284.5 L152.0 284.7 L153.0 285.1 M172.0 312.2 L173.0 312.7 L174.0 313.0 L175.0 313.0 L176.0 312.7 L177.0 312.2 M196.0 283.5 L197.0 283.0 L198.0 282.8 L199.0 282.9 L200.0 283.2 M220.0 314.2 L221.0 314.7 L222.0 314.8 L223.0 314.7 L224.0 314.3 M244.0 284.9 L245.0 284.6 L246.0 284.5 L247.0 284.7 L248.0 285.1 M267.0 312.3 L268.0 312.7 L269.0 313.0 L270.0 313.0 L271.0 312.7 L272.0 312.2 M291.0 284.1 L292.0 283.7 L293.0 283.5 L294.0 283.6 L295.0 283.9 M315.0 312.9 L316.0 313.3 L317.0 313.4 L318.0 313.3 L319.0 312.9 M338.0 287.1 L339.0 286.6 L340.0 286.4 L341.0 286.3 L342.0 286.5 L343.0 287.0 M362.0 315.1 L363.0 315.6 L364.0 315.8 L365.0 315.7 L366.0 315.4 M386.0 284.1 L387.0 283.7 L388.0 283.5 L389.0 283.6 L390.0 284.0 M410.0 313.7 L411.0 314.0 L412.0 314.1 L413.0 313.9 L414.0 313.5 M433.0 285.3 L434.0 284.8 L435.0 284.5 L436.0 284.5 L437.0 284.8 L438.0 285.3 M457.0 312.8 L458.0 313.2 L459.0 313.4 L460.0 313.3 L461.0 313.1 L462.0 312.6 M480.0 289.6 L481.0 289.0 L482.0 288.7 L483.0 288.6 L484.0 288.7 L485.0 289.1 M505.0 317.3 L506.0 317.6 L507.0 317.7 L508.0 317.5 L509.0 317.0 M528.0 286.0 L529.0 285.5 L530.0 285.2 L531.0 285.2 L532.0 285.6 M552.0 318.1 L553.0 318.6 L554.0 318.8 L555.0 318.7 L556.0 318.3 M576.0 286.8 L577.0 286.4 L578.0 286.3 L579.0 286.5 L580.0 286.8 M599.0 314.0 L600.0 314.5 L601.0 314.8 L602.0 314.8 L603.0 314.5 L604.0 314.1 M623.0 285.9 L624.0 285.4 L625.0 285.2 L626.0 285.3 L627.0 285.6 M647.0 314.3 L648.0 314.7 L649.0 314.8 L650.0 314.7 L651.0 314.3 M671.0 283.9 L672.0 283.6 L673.0 283.5 L674.0 283.7 L675.0 284.2 M695.0 316.1 L696.0 316.4 L697.0 316.4 L698.0 316.1 M718.0 284.7 L719.0 284.2 L720.0 284.0 L721.0 284.1 L722.0 284.4 M742.0 313.6 L743.0 314.0 L744.0 314.1 L745.0 314.0 L746.0 313.5 M766.0 283.9 L767.0 283.6 L768.0 283.5 L769.0 283.7 L770.0 284.3 M789.0 315.6 L790.0 316.1 L791.0 316.4 L792.0 316.4 L793.0 316.1 M813.0 285.8 L814.0 285.4 L815.0 285.2 L816.0 285.3 L817.0 285.7 M837.0 314.8 L838.0 315.2 L839.0 315.3 L840.0 315.1 L841.0 314.6 M861.0 283.2 L862.0 282.9 L863.0 282.8 L864.0 283.1 L865.0 283.6 M884.0 313.4 L885.0 313.9 L886.0 314.1 L887.0 314.0 L888.0 313.7 L889.0 313.2 M908.0 285.7 L909.0 285.3 L910.0 285.2 L911.0 285.3 L912.0 285.7 M932.0 317.0 L933.0 317.3 L934.0 317.4 L935.0 317.2 L936.0 316.7" stroke="#e03828" stroke-width="2.5"/>
<path d="M2.0 287.1 L3.0 285.6 L4.0 284.3 L5.0 283.3 L6.0 282.5 L7.0 281.9 L8.0 281.6 L9.0 281.6 L10.0 281.9 L11.0 282.5 L12.0 283.3 L13.0 284.3 L14.0 285.6 L15.0 287.1 L16.0 288.7 L17.0 290.6 L18.0 292.5 L19.0 294.5 L20.0 296.6 L21.0 298.7 L22.0 300.7 L23.0 302.7 L24.0 304.6 L25.0 306.4 L26.0 308.0 L27.0 309.4 L28.0 310.6 L29.0 311.6 L30.0 312.3 L31.0 312.8 L32.0 313.0 L33.0 312.9 L34.0 312.6 L35.0 312.0 L36.0 311.2 L37.0 310.2 L38.0 308.9 L39.0 307.5 L40.0 305.9 L41.0 304.2 L42.0 302.4 L43.0 300.6 L44.0 298.6 L45.0 296.7 L46.0 294.8 L47.0 293.0 L48.0 291.3 L49.0 289.7 L50.0 288.3 L51.0 287.0 L52.0 285.9 L53.0 285.1 L54.0 284.5 L55.0 284.1 L56.0 284.0 L57.0 284.1 L58.0 284.6 L59.0 285.2 L60.0 286.1 L61.0 287.3 L62.0 288.6 L63.0 290.1 L64.0 291.8 L65.0 293.7 L66.0 295.6 L67.0 297.5 L68.0 299.6 L69.0 301.5 L70.0 303.5 L71.0 305.4 L72.0 307.2 L73.0 308.8 L74.0 310.2 L75.0 311.5 L76.0 312.6 L77.0 313.4 L78.0 313.9 L79.0 314.2 L80.0 314.3 L81.0 314.0 L82.0 313.5 L83.0 312.7 L84.0 311.6 L85.0 310.3 L86.0 308.8 L87.0 307.1 L88.0 305.2 L89.0 303.2 L90.0 301.1 L91.0 298.9 L92.0 296.7 L93.0 294.5 L94.0 292.4 L95.0 290.4 L96.0 288.5 L97.0 286.8 L98.0 285.2 L99.0 283.9 L100.0 282.8 L101.0 282.0 L102.0 281.5 L103.0 281.2 L104.0 281.3 L105.0 281.6 L106.0 282.2 L107.0 283.0 L108.0 284.2 L109.0 285.5 L110.0 287.1 L111.0 288.9 L112.0 290.8 L113.0 292.8 L114.0 294.9 L115.0 297.1 L116.0 299.3 L117.0 301.4 L118.0 303.5 L119.0 305.5 L120.0 307.3 L121.0 309.0 L122.0 310.5 L123.0 311.7 L124.0 312.7 L125.0 313.5 L126.0 313.9 L127.0 314.1 L128.0 314.0 L129.0 313.6 L130.0 313.0 L131.0 312.2 L132.0 311.1 L133.0 309.8 L134.0 308.4 L135.0 306.7 L136.0 305.0 L137.0 303.1 L138.0 301.2 L139.0 299.3 L140.0 297.3 L141.0 295.4 L142.0 293.5 L143.0 291.8 L144.0 290.2 L145.0 288.7 L146.0 287.4 L147.0 286.4 L148.0 285.5 L149.0 284.9 L150.0 284.6 L151.0 284.5 L152.0 284.7 L153.0 285.1 L154.0 285.7 L155.0 286.6 L156.0 287.7 L157.0 289.0 L158.0 290.4 L159.0 292.0 L160.0 293.8 L161.0 295.6 L162.0 297.4 L163.0 299.3 L164.0 301.2 L165.0 303.0 L166.0 304.8 L167.0 306.4 L168.0 308.0 L169.0 309.3 L170.0 310.5 L171.0 311.5 L172.0 312.2 L173.0 312.7 L174.0 313.0 L175.0 313.0 L176.0 312.7 L177.0 312.2 L178.0 311.5 L179.0 310.5 L180.0 309.2 L181.0 307.8 L182.0 306.2 L183.0 304.5 L184.0 302.7 L185.0 300.7 L186.0 298.7 L187.0 296.8 L188.0 294.8 L189.0 292.9 L190.0 291.0 L191.0 289.3 L192.0 287.7 L193.0 286.4 L194.0 285.2 L195.0 284.2 L196.0 283.5 L197.0 283.0 L198.0 282.8 L199.0 282.9 L200.0 283.2 L201.0 283.8 L202.0 284.7 L203.0 285.8 L204.0 287.2 L205.0 288.7 L206.0 290.4 L207.0 292.3 L208.0 294.3 L209.0 296.4 L210.0 298.5 L211.0 300.6 L212.0 302.7 L213.0 304.7 L214.0 306.6 L215.0 308.4 L216.0 310.0 L217.0 311.4 L218.0 312.6 L219.0 313.6 L220.0 314.2 L221.0 314.7 L222.0 314.8 L223.0 314.7 L224.0 314.3 L225.0 313.6 L226.0 312.7 L227.0 311.6 L228.0 310.3 L229.0 308.8 L230.0 307.1 L231.0 305.3 L232.0 303.4 L233.0 301.4 L234.0 299.4 L235.0 297.4 L236.0 295.4 L237.0 293.6 L238.0 291.8 L239.0 290.1 L240.0 288.7 L241.0 287.4 L242.0 286.3 L243.0 285.5 L244.0 284.9 L245.0 284.6 L246.0 284.5 L247.0 284.7 L248.0 285.1 L249.0 285.8 L250.0 286.7 L251.0 287.8 L252.0 289.1 L253.0 290.6 L254.0 292.2 L255.0 293.9 L256.0 295.8 L257.0 297.6 L258.0 299.5 L259.0 301.4 L260.0 303.2 L261.0 305.0 L262.0 306.6 L263.0 308.1 L264.0 309.4 L265.0 310.6 L266.0 311.5 L267.0 312.3 L268.0 312.7 L269.0 313.0 L270.0 313.0 L271.0 312.7 L272.0 312.2 L273.0 311.4 L274.0 310.4 L275.0 309.2 L276.0 307.8 L277.0 306.2 L278.0 304.5 L279.0 302.7 L280.0 300.8 L281.0 298.9 L282.0 296.9 L283.0 295.0 L284.0 293.1 L285.0 291.4 L286.0 289.7 L287.0 288.2 L288.0 286.9 L289.0 285.7 L290.0 284.8 L291.0 284.1 L292.0 283.7 L293.0 283.5 L294.0 283.6 L295.0 283.9 L296.0 284.5 L297.0 285.4 L298.0 286.4 L299.0 287.7 L300.0 289.2 L301.0 290.8 L302.0 292.6 L303.0 294.4 L304.0 296.4 L305.0 298.4 L306.0 300.3 L307.0 302.3 L308.0 304.1 L309.0 305.9 L310.0 307.6 L311.0 309.1 L312.0 310.4 L313.0 311.4 L314.0 312.3 L315.0 312.9 L316.0 313.3 L317.0 313.4 L318.0 313.3 L319.0 312.9 L320.0 312.3 L321.0 311.5 L322.0 310.4 L323.0 309.2 L324.0 307.9 L325.0 306.3 L326.0 304.7 L327.0 303.0 L328.0 301.2 L329.0 299.4 L330.0 297.7 L331.0 295.9 L332.0 294.2 L333.0 292.7 L334.0 291.2 L335.0 289.9 L336.0 288.8 L337.0 287.8 L338.0 287.1 L339.0 286.6 L340.0 286.4 L341.0 286.3 L342.0 286.5 L343.0 287.0 L344.0 287.7 L345.0 288.7 L346.0 289.9 L347.0 291.2 L348.0 292.8 L349.0 294.4 L350.0 296.3 L351.0 298.1 L352.0 300.1 L353.0 302.0 L354.0 304.0 L355.0 305.8 L356.0 307.7 L357.0 309.3 L358.0 310.9 L359.0 312.2 L360.0 313.4 L361.0 314.4 L362.0 315.1 L363.0 315.6 L364.0 315.8 L365.0 315.7 L366.0 315.4 L367.0 314.8 L368.0 314.0 L369.0 312.8 L370.0 311.5 L371.0 309.9 L372.0 308.2 L373.0 306.3 L374.0 304.3 L375.0 302.3 L376.0 300.1 L377.0 298.0 L378.0 295.9 L379.0 293.9 L380.0 291.9 L381.0 290.1 L382.0 288.5 L383.0 287.0 L384.0 285.8 L385.0 284.8 L386.0 284.1 L387.0 283.7 L388.0 283.5 L389.0 283.6 L390.0 284.0 L391.0 284.6 L392.0 285.5 L393.0 286.6 L394.0 287.9 L395.0 289.5 L396.0 291.1 L397.0 293.0 L398.0 294.9 L399.0 296.9 L400.0 298.9 L401.0 300.9 L402.0 302.9 L403.0 304.8 L404.0 306.6 L405.0 308.3 L406.0 309.8 L407.0 311.1 L408.0 312.2 L409.0 313.1 L410.0 313.7 L411.0 314.0 L412.0 314.1 L413.0 313.9 L414.0 313.5 L415.0 312.8 L416.0 311.9 L417.0 310.7 L418.0 309.4 L419.0 307.9 L420.0 306.2 L421.0 304.4 L422.0 302.6 L423.0 300.6 L424.0 298.7 L425.0 296.7 L426.0 294.8 L427.0 293.0 L428.0 291.3 L429.0 289.7 L430.0 288.3 L431.0 287.1 L432.0 286.1 L433.0 285.3 L434.0 284.8 L435.0 284.5 L436.0 284.5 L437.0 284.8 L438.0 285.3 L439.0 286.0 L440.0 286.9 L441.0 288.1 L442.0 289.5 L443.0 291.0 L444.0 292.7 L445.0 294.4 L446.0 296.3 L447.0 298.2 L448.0 300.1 L449.0 302.0 L450.0 303.8 L451.0 305.6 L452.0 307.2 L453.0 308.7 L454.0 310.0 L455.0 311.2 L456.0 312.1 L457.0 312.8 L458.0 313.2 L459.0 313.4 L460.0 313.3 L461.0 313.1 L462.0 312.6 L463.0 311.9 L464.0 311.0 L465.0 310.0 L466.0 308.8 L467.0 307.4 L468.0 306.0 L469.0 304.4 L470.0 302.8 L471.0 301.2 L472.0 299.6 L473.0 298.0 L474.0 296.4 L475.0 294.9 L476.0 293.5 L477.0 292.3 L478.0 291.2 L479.0 290.3 L480.0 289.6 L481.0 289.0 L482.0 288.7 L483.0 288.6 L484.0 288.7 L485.0 289.1 L486.0 289.7 L487.0 290.6 L488.0 291.7 L489.0 293.0 L490.0 294.4 L491.0 296.0 L492.0 297.8 L493.0 299.6 L494.0 301.5 L495.0 303.4 L496.0 305.4 L497.0 307.2 L498.0 309.1 L499.0 310.8 L500.0 312.3 L501.0 313.7 L502.0 315.0 L503.0 316.0 L504.0 316.8 L505.0 317.3 L506.0 317.6 L507.0 317.7 L508.0 317.5 L509.0 317.0 L510.0 316.2 L511.0 315.1 L512.0 313.9 L513.0 312.4 L514.0 310.7 L515.0 308.9 L516.0 306.9 L517.0 304.8 L518.0 302.7 L519.0 300.5 L520.0 298.4 L521.0 296.3 L522.0 294.3 L523.0 292.5 L524.0 290.8 L525.0 289.2 L526.0 287.9 L527.0 286.9 L528.0 286.0 L529.0 285.5 L530.0 285.2 L531.0 285.2 L532.0 285.6 L533.0 286.2 L534.0 287.0 L535.0 288.2 L536.0 289.5 L537.0 291.1 L538.0 292.9 L539.0 294.9 L540.0 297.0 L541.0 299.1 L542.0 301.3 L543.0 303.6 L544.0 305.8 L545.0 307.9 L546.0 309.9 L547.0 311.8 L548.0 313.5 L549.0 315.0 L550.0 316.3 L551.0 317.4 L552.0 318.1 L553.0 318.6 L554.0 318.8 L555.0 318.7 L556.0 318.3 L557.0 317.7 L558.0 316.7 L559.0 315.6 L560.0 314.2 L561.0 312.6 L562.0 310.8 L563.0 308.9 L564.0 306.9 L565.0 304.7 L566.0 302.6 L567.0 300.5 L568.0 298.4 L569.0 296.3 L570.0 294.4 L571.0 292.6 L572.0 291.0 L573.0 289.6 L574.0 288.4 L575.0 287.5 L576.0 286.8 L577.0 286.4 L578.0 286.3 L579.0 286.5 L580.0 286.8 L581.0 287.5 L582.0 288.4 L583.0 289.4 L584.0 290.7 L585.0 292.2 L586.0 293.8 L587.0 295.5 L588.0 297.3 L589.0 299.1 L590.0 301.0 L591.0 302.9 L592.0 304.7 L593.0 306.5 L594.0 308.2 L595.0 309.7 L596.0 311.1 L597.0 312.2 L598.0 313.2 L599.0 314.0 L600.0 314.5 L601.0 314.8 L602.0 314.8 L603.0 314.5 L604.0 314.1 L605.0 313.3 L606.0 312.4 L607.0 311.2 L608.0 309.8 L609.0 308.3 L610.0 306.6 L611.0 304.8 L612.0 302.9 L613.0 300.9 L614.0 299.0 L615.0 297.0 L616.0 295.1 L617.0 293.3 L618.0 291.7 L619.0 290.1 L620.0 288.8 L621.0 287.6 L622.0 286.6 L623.0 285.9 L624.0 285.4 L625.0 285.2 L626.0 285.3 L627.0 285.6 L628.0 286.1 L629.0 286.9 L630.0 287.9 L631.0 289.2 L632.0 290.6 L633.0 292.2 L634.0 293.9 L635.0 295.7 L636.0 297.7 L637.0 299.6 L638.0 301.6 L639.0 303.5 L640.0 305.4 L641.0 307.1 L642.0 308.8 L643.0 310.3 L644.0 311.6 L645.0 312.7 L646.0 313.6 L647.0 314.3 L648.0 314.7 L649.0 314.8 L650.0 314.7 L651.0 314.3 L652.0 313.6 L653.0 312.7 L654.0 311.6 L655.0 310.2 L656.0 308.6 L657.0 306.9 L658.0 305.1 L659.0 303.1 L660.0 301.1 L661.0 299.0 L662.0 296.9 L663.0 294.9 L664.0 293.0 L665.0 291.1 L666.0 289.4 L667.0 287.9 L668.0 286.6 L669.0 285.4 L670.0 284.6 L671.0 283.9 L672.0 283.6 L673.0 283.5 L674.0 283.7 L675.0 284.2 L676.0 285.0 L677.0 286.0 L678.0 287.3 L679.0 288.7 L680.0 290.4 L681.0 292.3 L682.0 294.3 L683.0 296.4 L684.0 298.5 L685.0 300.7 L686.0 302.9 L687.0 305.0 L688.0 307.0 L689.0 308.9 L690.0 310.7 L691.0 312.2 L692.0 313.6 L693.0 314.7 L694.0 315.5 L695.0 316.1 L696.0 316.4 L697.0 316.4 L698.0 316.1 L699.0 315.5 L700.0 314.7 L701.0 313.6 L702.0 312.3 L703.0 310.8 L704.0 309.1 L705.0 307.2 L706.0 305.2 L707.0 303.1 L708.0 301.0 L709.0 298.9 L710.0 296.7 L711.0 294.7 L712.0 292.7 L713.0 290.9 L714.0 289.2 L715.0 287.8 L716.0 286.5 L717.0 285.5 L718.0 284.7 L719.0 284.2 L720.0 284.0 L721.0 284.1 L722.0 284.4 L723.0 285.0 L724.0 285.8 L725.0 286.9 L726.0 288.2 L727.0 289.6 L728.0 291.3 L729.0 293.0 L730.0 294.9 L731.0 296.9 L732.0 298.9 L733.0 300.8 L734.0 302.8 L735.0 304.7 L736.0 306.5 L737.0 308.2 L738.0 309.7 L739.0 311.0 L740.0 312.1 L741.0 313.0 L742.0 313.6 L743.0 314.0 L744.0 314.1 L745.0 314.0 L746.0 313.5 L747.0 312.9 L748.0 312.0 L749.0 310.8 L750.0 309.5 L751.0 307.9 L752.0 306.2 L753.0 304.4 L754.0 302.5 L755.0 300.5 L756.0 298.4 L757.0 296.4 L758.0 294.5 L759.0 292.6 L760.0 290.8 L761.0 289.1 L762.0 287.6 L763.0 286.4 L764.0 285.3 L765.0 284.5 L766.0 283.9 L767.0 283.6 L768.0 283.5 L769.0 283.7 L770.0 284.3 L771.0 285.0 L772.0 286.1 L773.0 287.4 L774.0 288.9 L775.0 290.6 L776.0 292.5 L777.0 294.5 L778.0 296.6 L779.0 298.8 L780.0 300.9 L781.0 303.1 L782.0 305.2 L783.0 307.2 L784.0 309.1 L785.0 310.8 L786.0 312.4 L787.0 313.7 L788.0 314.8 L789.0 315.6 L790.0 316.1 L791.0 316.4 L792.0 316.4 L793.0 316.1 L794.0 315.5 L795.0 314.7 L796.0 313.6 L797.0 312.3 L798.0 310.8 L799.0 309.2 L800.0 307.3 L801.0 305.4 L802.0 303.4 L803.0 301.4 L804.0 299.3 L805.0 297.3 L806.0 295.3 L807.0 293.4 L808.0 291.7 L809.0 290.1 L810.0 288.7 L811.0 287.5 L812.0 286.5 L813.0 285.8 L814.0 285.4 L815.0 285.2 L816.0 285.3 L817.0 285.7 L818.0 286.3 L819.0 287.1 L820.0 288.2 L821.0 289.5 L822.0 291.0 L823.0 292.6 L824.0 294.4 L825.0 296.3 L826.0 298.3 L827.0 300.2 L828.0 302.2 L829.0 304.2 L830.0 306.1 L831.0 307.9 L832.0 309.5 L833.0 311.0 L834.0 312.3 L835.0 313.4 L836.0 314.2 L837.0 314.8 L838.0 315.2 L839.0 315.3 L840.0 315.1 L841.0 314.6 L842.0 313.9 L843.0 312.9 L844.0 311.7 L845.0 310.2 L846.0 308.6 L847.0 306.7 L848.0 304.8 L849.0 302.7 L850.0 300.6 L851.0 298.5 L852.0 296.3 L853.0 294.2 L854.0 292.2 L855.0 290.3 L856.0 288.6 L857.0 287.1 L858.0 285.7 L859.0 284.6 L860.0 283.8 L861.0 283.2 L862.0 282.9 L863.0 282.8 L864.0 283.1 L865.0 283.6 L866.0 284.4 L867.0 285.4 L868.0 286.6 L869.0 288.1 L870.0 289.7 L871.0 291.5 L872.0 293.5 L873.0 295.5 L874.0 297.5 L875.0 299.6 L876.0 301.6 L877.0 303.6 L878.0 305.5 L879.0 307.3 L880.0 309.0 L881.0 310.4 L882.0 311.6 L883.0 312.6 L884.0 313.4 L885.0 313.9 L886.0 314.1 L887.0 314.0 L888.0 313.7 L889.0 313.2 L890.0 312.4 L891.0 311.4 L892.0 310.2 L893.0 308.8 L894.0 307.2 L895.0 305.5 L896.0 303.8 L897.0 301.9 L898.0 300.0 L899.0 298.1 L900.0 296.2 L901.0 294.4 L902.0 292.6 L903.0 291.0 L904.0 289.6 L905.0 288.3 L906.0 287.2 L907.0 286.4 L908.0 285.7 L909.0 285.3 L910.0 285.2 L911.0 285.3 L912.0 285.7 L913.0 286.4 L914.0 287.4 L915.0 288.5 L916.0 290.0 L917.0 291.6 L918.0 293.3 L919.0 295.3 L920.0 297.3 L921.0 299.4 L922.0 301.5 L923.0 303.6 L924.0 305.7 L925.0 307.7 L926.0 309.6 L927.0 311.4 L928.0 312.9 L929.0 314.3 L930.0 315.5 L931.0 316.3 L932.0 317.0 L933.0 317.3 L934.0 317.4 L935.0 317.2 L936.0 316.7 L937.0 315.9 L938.0 314.8 L939.0 313.5 L940.0 312.0 L941.0 310.3 L942.0 308.4" stroke="#e07a20" stroke-width="1.4" stroke-dasharray="1.5 1.5" stroke-linecap="butt" stroke-opacity="0.85"/>
</g>
<!-- markers -->
<path d="M2 293H13L20 300.5L13 308H2Z" fill="#ffff00"/>
<rect x="7" y="296" width="2.4" height="10" fill="#000"/>
<path d="M950 293H938.5L931 300.5L938.5 308H950Z" fill="#8f12f4"/>
<path d="M941 296.2H948M944.5 296.2V306" stroke="#10083a" stroke-width="2.2"/>
<path d="M468 48H483V61L475.5 67.5L468 61Z" fill="#22ee22"/>
<path d="M473 51V60M478.5 51V60M473 55.5H478.5" stroke="#001a00" stroke-width="2"/>
</svg>

<!-- measurement box -->
<div class="a" style="left:11px;top:494px;width:930px;height:48px;background:rgba(36,38,36,0.86)"></div>

<!-- bottom panels -->
<div class="pn" style="left:0;width:130px"><div class="lb" style="background:#ffff00;left:2px;width:38px"></div></div>
<div class="pn" style="left:134px"><div class="lb" style="background:#9a9a9a"></div></div>
<div class="pn" style="left:268px"><div class="lb" style="background:#3390ff"></div></div>
<div class="pn" style="left:402px"><div class="lb" style="background:#ff8a30"></div></div>
<div class="pn" style="left:536px"><div class="lb" style="background:#b042ff"></div></div>
<div class="pn" style="left:670px"><div class="lb" style="background:#ff2a90"></div></div>
<div class="pn" style="left:804px"><div class="lb" style="background:#32ee88"></div></div>


<!-- measurement text -->
<div class="ml" style="left:18px;top:502px">MIN</div><div class="ml" style="left:66px;top:502px">uV</div>
<div class="ml" style="left:18px;top:526px">F</div><div class="ml" style="left:87px;top:526px;letter-spacing:-1px">KHz</div>
<div class="ml" style="left:181px;top:502px;letter-spacing:1px">AVG</div><div class="ml" style="left:232px;top:502px">uV</div>
<div class="ml" style="left:181px;top:526px;letter-spacing:1px">VPP</div><div class="ml" style="left:248px;top:526px;letter-spacing:2px">mV</div>
<div class="ml" style="left:343px;top:502px;letter-spacing:1px">RMS</div><div class="ml" style="left:394px;top:502px">uV</div>
<div class="ml" style="left:343px;top:526px;letter-spacing:1px">AVG</div><div class="ml" style="left:402px;top:526px">uV</div>
<div class="ml" style="left:504px;top:502px">VP</div><div class="ml" style="left:546px;top:502px">uV</div>
<div class="ml" style="left:505px;top:526px;letter-spacing:1px">RMS</div><div class="ml" style="left:579px;top:526px">uV</div>
<div class="ml" style="left:667px;top:502px;letter-spacing:1px">VPP</div><div class="ml" style="left:717px;top:502px">uV</div>
<div class="ml" style="left:666px;top:526px">VP</div><div class="ml" style="left:739px;top:526px">uV</div>
<div class="ml" style="left:827px;top:502px">F</div><div class="ml" style="left:859px;top:502px">mHz</div>
<div class="ml" style="left:828px;top:526px">MIN</div><div class="ml" style="left:907px;top:526px">uV</div>

<!-- vals --><svg class="a" style="left:0;top:0" width="955" height="556">
<g fill="none" stroke="#000" stroke-width="3" stroke-opacity="0.55"><g transform="translate(50.0 497)"><rect x="0.8" y="0.8" width="8.8" height="15.4" rx="4.4"/></g></g>
<g fill="none" stroke="#000" stroke-width="3" stroke-opacity="0.55"><g transform="translate(215.6 497)"><rect x="0.8" y="0.8" width="8.8" height="15.4" rx="4.4"/></g></g>
<g fill="none" stroke="#000" stroke-width="3" stroke-opacity="0.55"><g transform="translate(377.6 497)"><rect x="0.8" y="0.8" width="8.8" height="15.4" rx="4.4"/></g></g>
<g fill="none" stroke="#000" stroke-width="3" stroke-opacity="0.55"><g transform="translate(529.8 497)"><rect x="0.8" y="0.8" width="8.8" height="15.4" rx="4.4"/></g></g>
<g fill="none" stroke="#000" stroke-width="3" stroke-opacity="0.55"><g transform="translate(700.6 497)"><rect x="0.8" y="0.8" width="8.8" height="15.4" rx="4.4"/></g></g>
<g fill="none" stroke="#000" stroke-width="3" stroke-opacity="0.55"><g transform="translate(842.7 497)"><rect x="0.8" y="0.8" width="8.8" height="15.4" rx="4.4"/></g></g>
<g fill="none" stroke="#000" stroke-width="3" stroke-opacity="0.55"><g transform="translate(31.8 521)"><path d="M0.8 3.6L4.4 0.8V16.2"/></g><g transform="translate(39.5 521)"><rect x="0" y="14.7" width="2.3" height="2.3" stroke="none"/></g><g transform="translate(45.0 521)"><rect x="0.8" y="0.8" width="8.8" height="15.4" rx="4.4"/></g><g transform="translate(58.9 521)"><rect x="0.8" y="0.8" width="8.8" height="15.4" rx="4.4"/></g><g transform="translate(72.2 521)"><path d="M0.8 3.8C1.2 1.9 2.8 0.8 4.8 0.8C7.2 0.8 8.6 2.3 8.6 4.4C8.6 6.5 7.2 7.8 4.6 7.8H3.8M4.6 7.8C7.5 7.8 9 9.5 9 12C9 14.6 7.2 16.2 4.8 16.2C2.6 16.2 1 15 0.8 13"/></g></g>
<g fill="none" stroke="#000" stroke-width="3" stroke-opacity="0.55"><g transform="translate(213.9 521)"><path d="M0.8 3.6L4.4 0.8V16.2"/></g><g transform="translate(221.1 521)"><rect x="0" y="14.7" width="2.3" height="2.3" stroke="none"/></g><g transform="translate(226.6 521)"><path d="M0.9 4.3C0.9 2.1 2.6 0.8 4.9 0.8C7.3 0.8 9 2.3 9 4.6C9 6.4 8 7.6 6.8 8.9L0.9 16.2H9.8"/></g><g transform="translate(237.8 521)"><path d="M0.8 3.6L4.4 0.8V16.2"/></g></g>
<g fill="none" stroke="#000" stroke-width="3" stroke-opacity="0.55"><g transform="translate(375.8 521)"><path d="M0 8.5H6"/></g><g transform="translate(385.8 521)"><path d="M1.5 13.6C2.1 15.3 3.5 16.2 5.3 16.2C8.1 16.2 9.6 14 9.6 9.8V5.4C9.6 2.4 7.8 0.8 5.2 0.8C2.5 0.8 0.7 2.5 0.7 5.3C0.7 8.1 2.5 9.7 5.2 9.7C7.3 9.7 9 8.6 9.6 6.8"/></g></g>
<g fill="none" stroke="#000" stroke-width="3" stroke-opacity="0.55"><g transform="translate(539.2 521)"><path d="M0.8 3.8C1.2 1.9 2.8 0.8 4.8 0.8C7.2 0.8 8.6 2.3 8.6 4.4C8.6 6.5 7.2 7.8 4.6 7.8H3.8M4.6 7.8C7.5 7.8 9 9.5 9 12C9 14.6 7.2 16.2 4.8 16.2C2.6 16.2 1 15 0.8 13"/></g><g transform="translate(551.2 521)"><path d="M0.8 3.8C1.2 1.9 2.8 0.8 4.8 0.8C7.2 0.8 8.6 2.3 8.6 4.4C8.6 6.5 7.2 7.8 4.6 7.8H3.8M4.6 7.8C7.5 7.8 9 9.5 9 12C9 14.6 7.2 16.2 4.8 16.2C2.6 16.2 1 15 0.8 13"/></g><g transform="translate(563.8 521)"><path d="M8.9 3.4C8.3 1.7 6.9 0.8 5.1 0.8C2.3 0.8 0.8 3 0.8 7.2V11.6C0.8 14.6 2.6 16.2 5.2 16.2C7.9 16.2 9.7 14.5 9.7 11.7C9.7 8.9 7.9 7.3 5.2 7.3C3.1 7.3 1.4 8.4 0.8 10.2"/></g></g>
<g fill="none" stroke="#000" stroke-width="3" stroke-opacity="0.55"><g transform="translate(690.0 521)"><path d="M0 8.5H6"/></g><g transform="translate(699.5 521)"><path d="M8.9 3.4C8.3 1.7 6.9 0.8 5.1 0.8C2.3 0.8 0.8 3 0.8 7.2V11.6C0.8 14.6 2.6 16.2 5.2 16.2C7.9 16.2 9.7 14.5 9.7 11.7C9.7 8.9 7.9 7.3 5.2 7.3C3.1 7.3 1.4 8.4 0.8 10.2"/></g><g transform="translate(712.4 521)"><path d="M0.9 4.3C0.9 2.1 2.6 0.8 4.9 0.8C7.3 0.8 9 2.3 9 4.6C9 6.4 8 7.6 6.8 8.9L0.9 16.2H9.8"/></g><g transform="translate(724.4 521)"><path d="M0.8 3.8C1.2 1.9 2.8 0.8 4.8 0.8C7.2 0.8 8.6 2.3 8.6 4.4C8.6 6.5 7.2 7.8 4.6 7.8H3.8M4.6 7.8C7.5 7.8 9 9.5 9 12C9 14.6 7.2 16.2 4.8 16.2C2.6 16.2 1 15 0.8 13"/></g></g>
<g fill="none" stroke="#000" stroke-width="3" stroke-opacity="0.55"><g transform="translate(857.8 521)"><path d="M0 8.5H6"/></g><g transform="translate(866.8 521)"><path d="M8.9 3.4C8.3 1.7 6.9 0.8 5.1 0.8C2.3 0.8 0.8 3 0.8 7.2V11.6C0.8 14.6 2.6 16.2 5.2 16.2C7.9 16.2 9.7 14.5 9.7 11.7C9.7 8.9 7.9 7.3 5.2 7.3C3.1 7.3 1.4 8.4 0.8 10.2"/></g><g transform="translate(879.6 521)"><path d="M0.9 4.3C0.9 2.1 2.6 0.8 4.9 0.8C7.3 0.8 9 2.3 9 4.6C9 6.4 8 7.6 6.8 8.9L0.9 16.2H9.8"/></g><g transform="translate(891.8 521)"><path d="M0.8 3.8C1.2 1.9 2.8 0.8 4.8 0.8C7.2 0.8 8.6 2.3 8.6 4.4C8.6 6.5 7.2 7.8 4.6 7.8H3.8M4.6 7.8C7.5 7.8 9 9.5 9 12C9 14.6 7.2 16.2 4.8 16.2C2.6 16.2 1 15 0.8 13"/></g></g>
<g fill="none" stroke="#34dee6" stroke-width="1.8"><g transform="translate(50.0 497)"><rect x="0.8" y="0.8" width="8.8" height="15.4" rx="4.4"/></g></g>
<g fill="none" stroke="#34dee6" stroke-width="1.8"><g transform="translate(215.6 497)"><rect x="0.8" y="0.8" width="8.8" height="15.4" rx="4.4"/></g></g>
<g fill="none" stroke="#34dee6" stroke-width="1.8"><g transform="translate(377.6 497)"><rect x="0.8" y="0.8" width="8.8" height="15.4" rx="4.4"/></g></g>
<g fill="none" stroke="#34dee6" stroke-width="1.8"><g transform="translate(529.8 497)"><rect x="0.8" y="0.8" width="8.8" height="15.4" rx="4.4"/></g></g>
<g fill="none" stroke="#34dee6" stroke-width="1.8"><g transform="translate(700.6 497)"><rect x="0.8" y="0.8" width="8.8" height="15.4" rx="4.4"/></g></g>
<g fill="none" stroke="#34dee6" stroke-width="1.8"><g transform="translate(842.7 497)"><rect x="0.8" y="0.8" width="8.8" height="15.4" rx="4.4"/></g></g>
<g fill="none" stroke="#eeee30" stroke-width="1.8"><g transform="translate(31.8 521)"><path d="M0.8 3.6L4.4 0.8V16.2"/></g><g transform="translate(39.5 521)"><rect x="0" y="14.7" width="2.3" height="2.3" stroke="none" fill="#eeee30"/></g><g transform="translate(45.0 521)"><rect x="0.8" y="0.8" width="8.8" height="15.4" rx="4.4"/></g><g transform="translate(58.9 521)"><rect x="0.8" y="0.8" width="8.8" height="15.4" rx="4.4"/></g><g transform="translate(72.2 521)"><path d="M0.8 3.8C1.2 1.9 2.8 0.8 4.8 0.8C7.2 0.8 8.6 2.3 8.6 4.4C8.6 6.5 7.2 7.8 4.6 7.8H3.8M4.6 7.8C7.5 7.8 9 9.5 9 12C9 14.6 7.2 16.2 4.8 16.2C2.6 16.2 1 15 0.8 13"/></g></g>
<g fill="none" stroke="#eeee30" stroke-width="1.8"><g transform="translate(213.9 521)"><path d="M0.8 3.6L4.4 0.8V16.2"/></g><g transform="translate(221.1 521)"><rect x="0" y="14.7" width="2.3" height="2.3" stroke="none" fill="#eeee30"/></g><g transform="translate(226.6 521)"><path d="M0.9 4.3C0.9 2.1 2.6 0.8 4.9 0.8C7.3 0.8 9 2.3 9 4.6C9 6.4 8 7.6 6.8 8.9L0.9 16.2H9.8"/></g><g transform="translate(237.8 521)"><path d="M0.8 3.6L4.4 0.8V16.2"/></g></g>
<g fill="none" stroke="#eeee30" stroke-width="1.8"><g transform="translate(375.8 521)"><path d="M0 8.5H6"/></g><g transform="translate(385.8 521)"><path d="M1.5 13.6C2.1 15.3 3.5 16.2 5.3 16.2C8.1 16.2 9.6 14 9.6 9.8V5.4C9.6 2.4 7.8 0.8 5.2 0.8C2.5 0.8 0.7 2.5 0.7 5.3C0.7 8.1 2.5 9.7 5.2 9.7C7.3 9.7 9 8.6 9.6 6.8"/></g></g>
<g fill="none" stroke="#eeee30" stroke-width="1.8"><g transform="translate(539.2 521)"><path d="M0.8 3.8C1.2 1.9 2.8 0.8 4.8 0.8C7.2 0.8 8.6 2.3 8.6 4.4C8.6 6.5 7.2 7.8 4.6 7.8H3.8M4.6 7.8C7.5 7.8 9 9.5 9 12C9 14.6 7.2 16.2 4.8 16.2C2.6 16.2 1 15 0.8 13"/></g><g transform="translate(551.2 521)"><path d="M0.8 3.8C1.2 1.9 2.8 0.8 4.8 0.8C7.2 0.8 8.6 2.3 8.6 4.4C8.6 6.5 7.2 7.8 4.6 7.8H3.8M4.6 7.8C7.5 7.8 9 9.5 9 12C9 14.6 7.2 16.2 4.8 16.2C2.6 16.2 1 15 0.8 13"/></g><g transform="translate(563.8 521)"><path d="M8.9 3.4C8.3 1.7 6.9 0.8 5.1 0.8C2.3 0.8 0.8 3 0.8 7.2V11.6C0.8 14.6 2.6 16.2 5.2 16.2C7.9 16.2 9.7 14.5 9.7 11.7C9.7 8.9 7.9 7.3 5.2 7.3C3.1 7.3 1.4 8.4 0.8 10.2"/></g></g>
<g fill="none" stroke="#eeee30" stroke-width="1.8"><g transform="translate(690.0 521)"><path d="M0 8.5H6"/></g><g transform="translate(699.5 521)"><path d="M8.9 3.4C8.3 1.7 6.9 0.8 5.1 0.8C2.3 0.8 0.8 3 0.8 7.2V11.6C0.8 14.6 2.6 16.2 5.2 16.2C7.9 16.2 9.7 14.5 9.7 11.7C9.7 8.9 7.9 7.3 5.2 7.3C3.1 7.3 1.4 8.4 0.8 10.2"/></g><g transform="translate(712.4 521)"><path d="M0.9 4.3C0.9 2.1 2.6 0.8 4.9 0.8C7.3 0.8 9 2.3 9 4.6C9 6.4 8 7.6 6.8 8.9L0.9 16.2H9.8"/></g><g transform="translate(724.4 521)"><path d="M0.8 3.8C1.2 1.9 2.8 0.8 4.8 0.8C7.2 0.8 8.6 2.3 8.6 4.4C8.6 6.5 7.2 7.8 4.6 7.8H3.8M4.6 7.8C7.5 7.8 9 9.5 9 12C9 14.6 7.2 16.2 4.8 16.2C2.6 16.2 1 15 0.8 13"/></g></g>
<g fill="none" stroke="#eeee30" stroke-width="1.8"><g transform="translate(857.8 521)"><path d="M0 8.5H6"/></g><g transform="translate(866.8 521)"><path d="M8.9 3.4C8.3 1.7 6.9 0.8 5.1 0.8C2.3 0.8 0.8 3 0.8 7.2V11.6C0.8 14.6 2.6 16.2 5.2 16.2C7.9 16.2 9.7 14.5 9.7 11.7C9.7 8.9 7.9 7.3 5.2 7.3C3.1 7.3 1.4 8.4 0.8 10.2"/></g><g transform="translate(879.6 521)"><path d="M0.9 4.3C0.9 2.1 2.6 0.8 4.9 0.8C7.3 0.8 9 2.3 9 4.6C9 6.4 8 7.6 6.8 8.9L0.9 16.2H9.8"/></g><g transform="translate(891.8 521)"><path d="M0.8 3.8C1.2 1.9 2.8 0.8 4.8 0.8C7.2 0.8 8.6 2.3 8.6 4.4C8.6 6.5 7.2 7.8 4.6 7.8H3.8M4.6 7.8C7.5 7.8 9 9.5 9 12C9 14.6 7.2 16.2 4.8 16.2C2.6 16.2 1 15 0.8 13"/></g></g>
</svg><!-- /vals -->
<!-- battery -->
<svg class="a" style="left:934px;top:560px" width="20" height="36">
<rect x="8" y="5" width="5" height="2.5" fill="#e8e8e8"/>
<rect x="4.7" y="7.7" width="11.6" height="23.3" fill="none" stroke="#e8e8e8" stroke-width="1.3"/>
<rect x="6" y="17" width="9" height="12.2" fill="#1e88f0"/>
</svg>
<!-- bottom panel texts -->
<div class="lbt" style="left:6px;top:559px;color:#000">CH<span class="i">I</span></div>
<div class="pt" style="left:58px;top:559px">BW</div>
<div class="pt" style="left:87px;top:559px;letter-spacing:-1px">4.<span class="i">I</span>4K</div>
<div class="pt" style="left:6px;top:582px;letter-spacing:1px">2mV</div>
<div class="pt" style="left:68px;top:582px">AC</div>
<div class="pt" style="left:111px;top:582px"><span class="i">I</span>X</div>
<div class="lbt" style="left:140px;top:559px;color:#000">CH2</div>
<div class="pt" style="left:140px;top:582px"><span class="i">I</span>OOmV</div>
<div class="pt" style="left:202px;top:582px">AC</div>
<div class="pt" style="left:245px;top:582px"><span class="i">I</span>X</div>
<div class="lbt" style="left:274px;top:559px;color:#0a1440">HOR</div>
<div class="pt" style="left:274px;top:582px">M = 2mS</div>
<div class="lbt" style="left:409px;top:559px;color:#1a0a00">ACQ</div>
<div class="pt" style="left:499px;top:559px">Run</div>
<div class="pt" style="left:409px;top:582px">2.5MS/s</div>
<div class="pt" style="left:489px;top:582px;letter-spacing:-0.5px"><span class="i">I</span>6bit</div>
<div class="lbt" style="left:543px;top:559px;color:#1a0a40">TRI</div>
<div class="pt" style="left:639px;top:559px;color:#f0f020;letter-spacing:-0.5px">CH<span class="i">I</span></div>
<div class="pt" style="left:543px;top:582px">Auto</div>
<svg class="a" style="left:600px;top:578px" width="20" height="20"><path d="M5 15.2H9.4V4.6H14" fill="none" stroke="#d0d0d0" stroke-width="1.3"/><path d="M5.9 10.6L9.4 7.6L13 10.6Z" fill="#d0d0d0"/></svg>
<div class="lbt" style="left:677px;top:559px;color:#400010">GEN</div>
<div class="pt" style="left:774px;top:559px;color:#6a6af8;letter-spacing:-2px">Sin</div>
<div class="pt" style="left:677px;top:582px"><span class="i">I</span>mV</div>
<div class="pt" style="left:736px;top:582px"><span class="i">I</span>KHz</div>
<div class="lbt" style="left:811px;top:559px;color:#000">MOV</div>
<div class="pt" style="left:811px;top:582px;letter-spacing:1px">Быстрый</div>
</body></html>
